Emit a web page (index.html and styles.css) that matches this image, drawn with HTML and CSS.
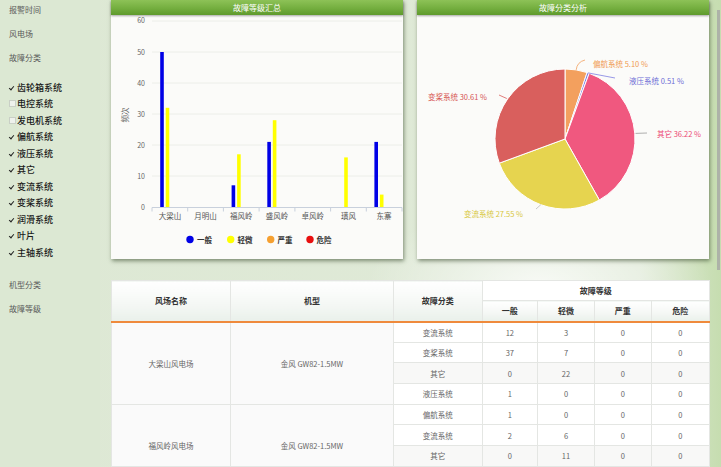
FILE: index.html
```html
<!DOCTYPE html>
<html lang="zh-CN">
<head>
<meta charset="utf-8">
<title>故障统计</title>
<link rel="stylesheet" href="styles.css">
</head>
<body>
<div class="page">
  <aside class="sidebar">
    <div class="nav-item">报警时间</div>
    <div class="nav-item">风电场</div>
    <div class="nav-item">故障分类</div>
    <ul class="checks">
      <li><span class="cb on"></span>齿轮箱系统</li>
      <li><span class="cb"></span>电控系统</li>
      <li><span class="cb"></span>发电机系统</li>
      <li><span class="cb on"></span>偏航系统</li>
      <li><span class="cb on"></span>液压系统</li>
      <li><span class="cb on"></span>其它</li>
      <li><span class="cb on"></span>变流系统</li>
      <li><span class="cb on"></span>变桨系统</li>
      <li><span class="cb on"></span>润滑系统</li>
      <li><span class="cb on"></span>叶片</li>
      <li><span class="cb on"></span>主轴系统</li>
    </ul>
    <div class="nav-item">机型分类</div>
    <div class="nav-item">故障等级</div>
  </aside>

  <main class="main">
    <div class="charts">
      <section class="panel">
        <h2 class="panel-title">故障等级汇总</h2>
        <svg class="chart" width="292" height="244" viewBox="0 15 292 244">
          <g class="grid-lines">
            <line x1="41" y1="21" x2="291" y2="21"/>
            <line x1="41" y1="52" x2="291" y2="52"/>
            <line x1="41" y1="83" x2="291" y2="83"/>
            <line x1="41" y1="114" x2="291" y2="114"/>
            <line x1="41" y1="145" x2="291" y2="145"/>
            <line x1="41" y1="176" x2="291" y2="176"/>
          </g>
          <g class="y-labels">
            <text x="34" y="23">60</text>
            <text x="34" y="54.5">50</text>
            <text x="34" y="85.5">40</text>
            <text x="34" y="116.5">30</text>
            <text x="34" y="147.5">20</text>
            <text x="34" y="178.5">10</text>
            <text x="34" y="209.5">0</text>
          </g>
          <text class="y-title" transform="translate(17 115) rotate(-90)">频次</text>
          <g class="axis">
            <line x1="41" y1="207.5" x2="291" y2="207.5"/>
            <line x1="41" y1="207.5" x2="41" y2="211.5"/>
            <line x1="76.7" y1="207.5" x2="76.7" y2="211.5"/>
            <line x1="112.4" y1="207.5" x2="112.4" y2="211.5"/>
            <line x1="148.1" y1="207.5" x2="148.1" y2="211.5"/>
            <line x1="183.9" y1="207.5" x2="183.9" y2="211.5"/>
            <line x1="219.6" y1="207.5" x2="219.6" y2="211.5"/>
            <line x1="255.3" y1="207.5" x2="255.3" y2="211.5"/>
            <line x1="291" y1="207.5" x2="291" y2="211.5"/>
          </g>
          <g class="bars-blue">
            <rect x="49.2" y="52" width="3.6" height="155"/>
            <rect x="120.6" y="185.3" width="3.6" height="21.7"/>
            <rect x="156.3" y="141.9" width="3.6" height="65.1"/>
            <rect x="263.4" y="141.9" width="3.6" height="65.1"/>
          </g>
          <g class="bars-yellow">
            <rect x="54.7" y="107.8" width="3.6" height="99.2"/>
            <rect x="126.1" y="154.3" width="3.6" height="52.7"/>
            <rect x="161.8" y="120.2" width="3.6" height="86.8"/>
            <rect x="233.2" y="157.4" width="3.6" height="49.6"/>
            <rect x="268.9" y="194.6" width="3.6" height="12.4"/>
          </g>
          <g class="x-labels">
            <text x="58.9" y="218.5">大梁山</text>
            <text x="94.6" y="218.5">月明山</text>
            <text x="130.3" y="218.5">福风岭</text>
            <text x="166" y="218.5">盛风岭</text>
            <text x="201.7" y="218.5">卓风岭</text>
            <text x="237.4" y="218.5">璜风</text>
            <text x="273.1" y="218.5">东寨</text>
          </g>
          <g class="legend">
            <circle class="dot-blue" cx="79" cy="239.5" r="3.7"/>
            <text x="86" y="242.5">一般</text>
            <circle class="dot-yellow" cx="119.7" cy="239.5" r="3.7"/>
            <text x="126.5" y="242.5">轻微</text>
            <circle class="dot-orange" cx="159.7" cy="239.5" r="3.7"/>
            <text x="166.5" y="242.5">严重</text>
            <circle class="dot-red" cx="199" cy="239.5" r="3.7"/>
            <text x="205.5" y="242.5">危险</text>
          </g>
        </svg>
      </section>

      <section class="panel">
        <h2 class="panel-title">故障分类分析</h2>
        <svg class="chart" width="292" height="244" viewBox="0 15 292 244">
          <g class="slices">
            <path class="s-orange" d="M148,139 L148,69 A70,70 0 0,1 170.06,72.56 Z"/>
            <path class="s-blue" d="M148,139 L170.06,72.56 A70,70 0 0,1 172.18,73.30 Z"/>
            <path class="s-pink" d="M148,139 L172.18,73.30 A70,70 0 0,1 182.35,199.99 Z"/>
            <path class="s-yellow" d="M148,139 L182.35,199.99 A70,70 0 0,1 82.31,163.17 Z"/>
            <path class="s-red" d="M148,139 L82.31,163.17 A70,70 0 0,1 148,69 Z"/>
          </g>
          <g class="leaders">
            <path class="l-orange" d="M159.2,69.9 Q160,62 168,60"/>
            <path class="l-blue" d="M171.1,72.9 L198,78"/>
            <path class="l-pink" d="M218.5,133.4 L230,133"/>
            <path class="l-yellow" d="M123.8,204.7 L119,209"/>
            <path class="l-red" d="M89.8,98.5 L82,95"/>
          </g>
          <g class="pie-labels">
            <text class="t-orange" x="176" y="66.5">偏航系统 5.10 %</text>
            <text class="t-blue" x="212" y="84">液压系统 0.51 %</text>
            <text class="t-pink" x="240" y="137">其它 36.22 %</text>
            <text class="t-yellow end" x="106" y="216.5">变流系统 27.55 %</text>
            <text class="t-red end" x="70" y="100">变桨系统 30.61 %</text>
          </g>
        </svg>
      </section>
    </div>

    <table class="grid">
      <colgroup>
        <col class="w-name"><col class="w-model"><col class="w-cat">
        <col class="w-lv1"><col class="w-lv2"><col class="w-lv3"><col class="w-lv4">
      </colgroup>
      <thead>
        <tr class="h1">
          <th rowspan="2" class="bot">风场名称</th>
          <th rowspan="2" class="bot">机型</th>
          <th rowspan="2" class="bot">故障分类</th>
          <th colspan="4" class="grp">故障等级</th>
        </tr>
        <tr class="h2">
          <th class="bot">一般</th>
          <th class="bot">轻微</th>
          <th class="bot">严重</th>
          <th class="bot">危险</th>
        </tr>
      </thead>
      <tbody>
        <tr>
          <td rowspan="4" class="merged">大梁山风电场</td>
          <td rowspan="4" class="merged">金风 GW82-1.5MW</td>
          <td>变流系统</td><td>12</td><td>3</td><td>0</td><td>0</td>
        </tr>
        <tr><td>变桨系统</td><td>37</td><td>7</td><td>0</td><td>0</td></tr>
        <tr class="alt"><td>其它</td><td>0</td><td>22</td><td>0</td><td>0</td></tr>
        <tr><td>液压系统</td><td>1</td><td>0</td><td>0</td><td>0</td></tr>
        <tr>
          <td rowspan="3" class="merged cont">福风岭风电场</td>
          <td rowspan="3" class="merged cont">金风 GW82-1.5MW</td>
          <td>偏航系统</td><td>1</td><td>0</td><td>0</td><td>0</td>
        </tr>
        <tr><td>变流系统</td><td>2</td><td>6</td><td>0</td><td>0</td></tr>
        <tr class="alt"><td>其它</td><td>0</td><td>11</td><td>0</td><td>0</td></tr>
      </tbody>
    </table>
  </main>
</div>
<div class="scroll-thumb"></div>
</body>
</html>
```

FILE: styles.css
```css
* { box-sizing: border-box; margin: 0; padding: 0; }

html, body {
  width: 721px;
  height: 467px;
  overflow: hidden;
}

body {
  position: relative;
  font-family: "Noto Sans CJK SC", "Noto Sans", sans-serif;
  background: #dfe9d6;
}

.page {
  display: flex;
  height: 467px;
  background:
    radial-gradient(ellipse 230px 110px at 540px 285px, rgba(255,255,255,0.75), rgba(255,255,255,0) 75%),
    linear-gradient(to right, #dde8d4 0, #e0ead8 640px, #c6ddb0 721px);
}

/* ---------- sidebar ---------- */
.sidebar {
  width: 100px;
  flex: none;
  background: #dce8d3;
}

.nav-item {
  height: 24px;
  line-height: 20px;
  padding-left: 9px;
  font-size: 8px;
  color: #5a5a5a;
}

.checks {
  list-style: none;
  padding: 7px 0 14px 9px;
}

.checks li {
  display: flex;
  align-items: center;
  height: 16.5px;
  font-size: 9px;
  color: #1a1a1a;
  font-weight: 500;
}

.cb {
  width: 7px;
  height: 7px;
  margin-right: 1px;
  flex: none;
  position: relative;
}

.cb:not(.on) {
  border: 1px solid #c9cfc6;
  background: #eef1ec;
}

.cb.on::before {
  content: "";
  position: absolute;
  left: 1px;
  top: 1px;
  width: 2px;
  height: 4px;
  border-right: 1.4px solid #222;
  border-bottom: 1.4px solid #222;
  transform: rotate(40deg);
}

/* ---------- main ---------- */
.main {
  flex: 1;
  padding: 0 12px 0 11px;
  display: flex;
  flex-direction: column;
}

.charts {
  display: flex;
  gap: 14px;
  height: 259px;
  flex: none;
}

.panel {
  width: 292px;
  height: 259px;
  background: #fbfbf9;
  box-shadow: 1px 2px 4px rgba(40, 60, 30, 0.55);
  display: flex;
  flex-direction: column;
}

.panel-title {
  height: 15px;
  line-height: 15px;
  text-align: center;
  font-size: 8px;
  font-weight: normal;
  color: #fff;
  background: linear-gradient(to bottom, #8dc257 0%, #74ae3f 55%, #5e9a2c 100%);
  box-shadow: 0 1px 2px rgba(0,0,0,0.35);
}

.chart {
  display: block;
  font-family: "Noto Sans CJK SC", "Noto Sans", sans-serif;
}

.grid-lines line { stroke: #eceee9; stroke-width: 1; }
.y-labels text { font-size: 7px; fill: #666; text-anchor: end; }
.y-title { font-size: 7.5px; fill: #666; text-anchor: middle; }
.axis line { stroke: #c8d0dc; stroke-width: 1; }
.bars-blue rect { fill: #0000e6; }
.bars-yellow rect { fill: #ffff00; }
.x-labels text { font-size: 7.5px; fill: #555; text-anchor: middle; }
.legend text { font-size: 7.5px; font-weight: 700; fill: #333; }
.dot-blue { fill: #0000e6; }
.dot-yellow { fill: #ffff00; }
.dot-orange { fill: #f5a030; }
.dot-red { fill: #e80f0f; }

.slices path { stroke: #fff; stroke-width: 1; }
.s-orange { fill: #f3a05e; }
.s-blue { fill: #7f7fe2; }
.s-pink { fill: #f0587f; }
.s-yellow { fill: #e6d44f; }
.s-red { fill: #d95f5d; }

.leaders path { fill: none; stroke-width: 0.8; }
.l-orange { stroke: #f3a05e; }
.l-blue { stroke: #7f7fe2; }
.l-pink { stroke: #9a9a9a; }
.l-yellow { stroke: #bbb; }
.l-red { stroke: #d95f5d; }

.pie-labels text { font-size: 7.5px; }
.pie-labels .end { text-anchor: end; }
.t-orange { fill: #f09a50; }
.t-blue { fill: #6b6bd6; }
.t-pink { fill: #ec4a74; }
.t-yellow { fill: #d8c83e; }
.t-red { fill: #d65552; }

/* ---------- table ---------- */
.grid {
  margin-top: 21px;
  width: 598px;
  border-collapse: collapse;
  table-layout: fixed;
  background: #fff;
  font-size: 7.5px;
  color: #666;
}

.w-name { width: 119px; }
.w-model { width: 163px; }
.w-cat { width: 88.7px; }
.w-lv1 { width: 55.3px; }
.w-lv2 { width: 57px; }
.w-lv3 { width: 56.7px; }
.w-lv4 { width: 58.3px; }

.grid th,
.grid td {
  border: 1px solid #e4e6e3;
  text-align: center;
  vertical-align: middle;
  padding: 0;
}

.grid th {
  font-size: 8px;
  font-weight: 700;
  color: #333;
  background: linear-gradient(to bottom, #ffffff 0%, #f4f7f4 60%, #e9f0ea 100%);
}

.grid th.grp {
  background: #fff;
}

.grid .h1 th { height: 20px; }
.grid .h2 th { height: 21px; }
.grid th.bot { border-bottom: 2px solid #ef8a3c; }

.grid td { height: 20.7px; background: #fff; }
.grid tr.alt td { background: #f8f8f7; }
.grid td.merged { background: #fafafa; }
.grid td.cont { padding-top: 20px; }

.scroll-thumb {
  position: absolute;
  right: 1px;
  top: 10px;
  width: 3px;
  height: 260px;
  background: #adb2a8;
}
```
